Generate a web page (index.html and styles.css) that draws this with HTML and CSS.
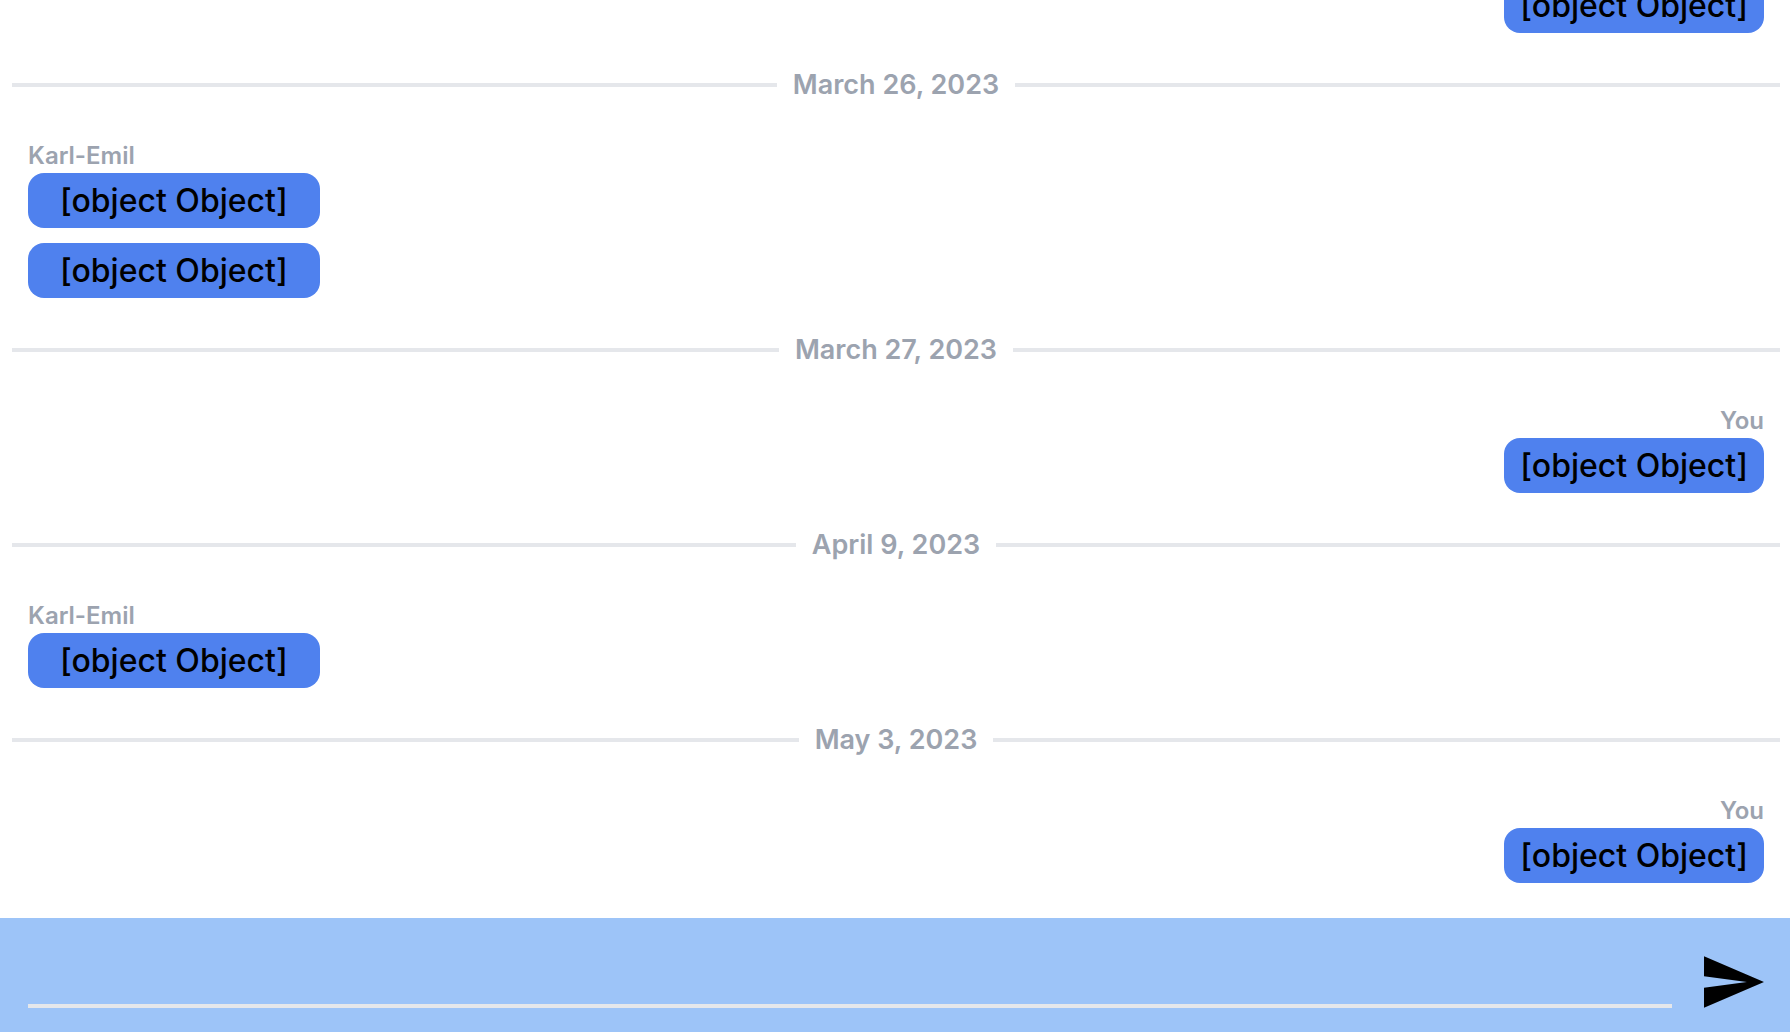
FILE: index.html
```html
<!DOCTYPE html>
<html lang="en">
<head>
<meta charset="utf-8">
<meta name="viewport" content="width=device-width, initial-scale=1">
<title>Chat</title>
<link rel="stylesheet" href="styles.css">
</head>
<body>
<main class="messages">
  <section class="group own">
    <p class="bubble">[object Object]</p>
  </section>
  <h2 class="divider">March 26, 2023</h2>
  <section class="group">
    <p class="author">Karl-Emil</p>
    <p class="bubble">[object Object]</p>
    <p class="bubble">[object Object]</p>
  </section>
  <h2 class="divider">March 27, 2023</h2>
  <section class="group own">
    <p class="author">You</p>
    <p class="bubble">[object Object]</p>
  </section>
  <h2 class="divider">April 9, 2023</h2>
  <section class="group">
    <p class="author">Karl-Emil</p>
    <p class="bubble">[object Object]</p>
  </section>
  <h2 class="divider">May 3, 2023</h2>
  <section class="group own">
    <p class="author">You</p>
    <p class="bubble">[object Object]</p>
  </section>
</main>
<form class="composer">
  <input class="composer-input" type="text" aria-label="Message">
  <button class="send" type="button" aria-label="Send">
    <svg class="send-icon" viewBox="2 3 21 18" aria-hidden="true"><path d="M2.01 21L23 12 2.01 3 2 10l15 2-15 2z"/></svg>
  </button>
</form>
</body>
</html>
```
FILE: styles.css
```css
* {
  box-sizing: border-box;
}

body {
  margin: 0;
  height: 100vh;
  display: flex;
  flex-direction: column;
  background: #fff;
  color: #000;
  font-family: Inter, "Liberation Sans", sans-serif;
}

.messages {
  flex: 1;
  min-height: 0;
  display: flex;
  flex-direction: column;
  justify-content: flex-end;
  overflow: hidden;
  padding-bottom: 35px;
}

.group {
  display: flex;
  flex-direction: column;
  align-items: flex-start;
  flex-shrink: 0;
  padding: 0 26px 0 28px;
}

.own {
  align-items: flex-end;
}

.author {
  margin: 0;
  color: #9ca3af;
  font-size: 24px;
  font-weight: 600;
  line-height: 34px;
}

.bubble {
  margin: 0;
  padding: 0 32px;
  border-radius: 16px;
  background: #4f81ee;
  font-size: 32px;
  font-weight: 500;
  line-height: 55px;
}

.own .bubble {
  padding: 0 16px;
}

.bubble + .bubble {
  margin-top: 15px;
}

.divider {
  display: flex;
  align-items: center;
  gap: 16px;
  flex-shrink: 0;
  margin: 31px 10px 33px 12px;
  color: #9ca3af;
  font-size: 27px;
  font-weight: 600;
  line-height: 42px;
}

.divider::before,
.divider::after {
  content: "";
  flex: 1;
  height: 4px;
  background: #e5e7eb;
}

.composer {
  display: flex;
  align-items: flex-end;
  gap: 32px;
  padding: 32px 26px 24px 28px;
  background: #9dc4f8;
}

.composer-input {
  flex: 1;
  min-width: 0;
  height: 58px;
  padding: 0;
  border: 0;
  border-bottom: 4px solid #e5e7eb;
  outline: 0;
  background: transparent;
  font: inherit;
  font-size: 27px;
}

.send {
  display: flex;
  padding: 0;
  border: 0;
  background: none;
  color: inherit;
  cursor: pointer;
}

.send-icon {
  width: 60px;
  height: 52px;
  fill: currentColor;
}
```
